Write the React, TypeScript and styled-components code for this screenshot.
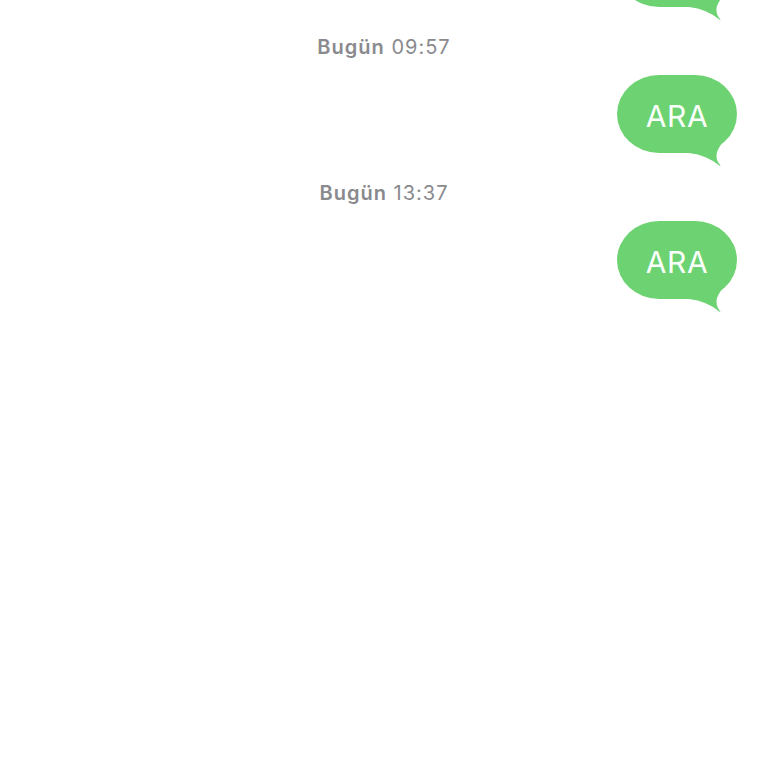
import styled, { createGlobalStyle } from 'styled-components';

const GlobalStyle = createGlobalStyle`
  html, body {
    margin: 0;
    padding: 0;
    background: #ffffff;
    overflow: hidden;
  }
`;

// Whole conversation column
const Thread = styled.div`
  display: flex;
  flex-direction: column;
  width: 768px;
  height: 768px;
  padding-right: 31px;
  box-sizing: border-box;
  overflow: hidden;
`;

// Gray day/time label in the middle
const Stamp = styled.div`
  align-self: center;
  margin-top: 29px;
  height: 22px;
  line-height: 22px;
  padding-left: 31px;
  font-family: Inter, "Liberation Sans", sans-serif;
  font-size: 20px;
  letter-spacing: 1px;
  color: #8a8a8e;
  white-space: nowrap;

  b {
    font-weight: 600;
  }
`;

// Green outgoing message
const Bubble = styled.div<{ $first?: boolean }>`
  position: relative;
  align-self: flex-end;
  margin-top: ${(p) => (p.$first ? '-71px' : '17px')};
  width: 120px;
  height: 78px;
  padding-top: 3px;
  box-sizing: border-box;
  border-radius: 42px / 39px;
  background: #6dd372;
  display: flex;
  align-items: center;
  justify-content: center;
`;

const BubbleText = styled.span`
  position: relative;
  z-index: 1;
  font-family: Inter, "Liberation Sans", sans-serif;
  font-size: 30px;
  color: #fbfffb;
  letter-spacing: 0.6px;
`;

const Tail = styled.svg`
  position: absolute;
  left: 0;
  top: 0;
  overflow: visible;
`;

const Message = ({ text, first }: { text: string; first?: boolean }) => (
  <Bubble $first={first}>
    <Tail width="120" height="95" viewBox="0 0 120 95">
      <path
        d="M66 66 L72 78 Q90 80 103 91 Q104 92 103 90 Q98 84 100 77 Q103 69 113 59 L100 50 Z"
        fill="#6dd372"
      />
    </Tail>
    <BubbleText>{text}</BubbleText>
  </Bubble>
);

export default function App() {
  return (
    <>
      <GlobalStyle />
      <Thread>
        <Message text="ARA" first />
        <Stamp>
          <b>Bugün</b> 09:57
        </Stamp>
        <Message text="ARA" />
        <Stamp>
          <b>Bugün</b> 13:37
        </Stamp>
        <Message text="ARA" />
      </Thread>
    </>
  );
}
